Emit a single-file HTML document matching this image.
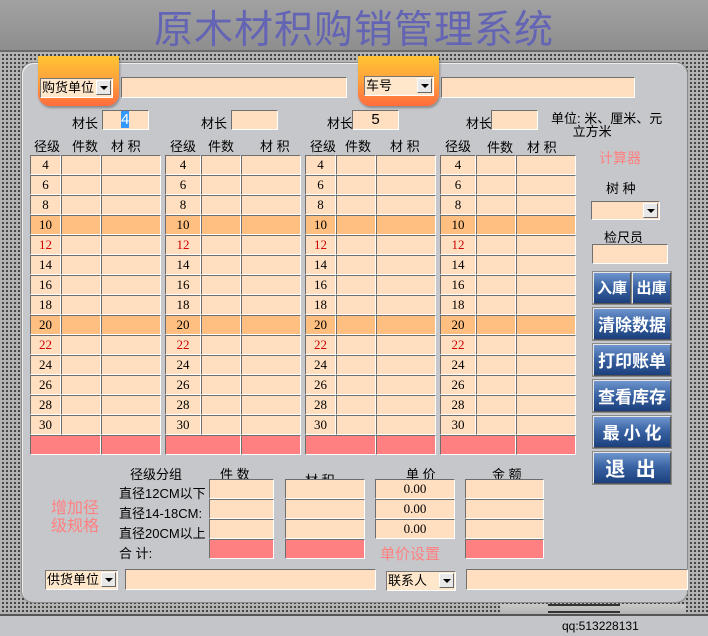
<!DOCTYPE html>
<html><head><meta charset="utf-8">
<style>
*{box-sizing:border-box;margin:0;padding:0}
body{width:708px;height:636px;overflow:hidden;position:relative;font-family:"Liberation Sans","Noto Sans CJK SC",sans-serif;font-size:12px;color:#000;
background:#b4b4b4 radial-gradient(circle,#3a3a3a 0.9px,transparent 1.3px) 1px 1px/4px 4px;}
.a{position:absolute}
#title{left:0;top:0;width:708px;height:52px;background:linear-gradient(#a2a2a2,#8e8e8e);border-bottom:2px solid #6a6a6a;text-align:center;font-size:39px;line-height:54px;color:#6464b4;letter-spacing:1px;font-family:"Noto Sans CJK SC",sans-serif}
#panel{left:21px;top:62px;width:667px;height:541px;background:#c6c7cb;border-radius:12px;border:1px solid #8a8a8a;box-shadow:inset 1px 1px 0 #eee}
#status{left:0;top:614px;width:708px;height:22px;background:#c4c5c9;border-top:2px solid #555}
.tab{width:81px;height:50px;border-radius:0 0 12px 12px;background:linear-gradient(#ffc432,#ffa03c 50%,#ff6c3c);box-shadow:1px 2px 2px rgba(0,0,0,.3)}
.in{background:#ffdfc0;border-top:1px solid #707070;border-left:1px solid #707070;border-right:1px solid #fff;border-bottom:1px solid #fff}
.cb{background:#ffe7cc;border:1px solid #fff;border-top-color:#777;border-left-color:#777;font-size:13px;line-height:17px;padding-left:1px}
.dd{position:absolute;right:1px;top:1px;width:15px;height:15px;background:#e8e8e8;border:1px solid #fff;border-right-color:#666;border-bottom-color:#666}
.dd:after{content:"";position:absolute;left:3px;top:5px;border-left:4px solid transparent;border-right:4px solid transparent;border-top:4px solid #000}
.g{display:grid;grid-auto-rows:20px}
.g div{background:#ffdfc0;border-top:1px solid #6e6e6e;border-left:1px solid #6e6e6e;border-right:1px solid #fff;border-bottom:1px solid #fff;text-align:center;line-height:18px;font-size:13px;font-family:"Liberation Serif","Noto Sans CJK SC",serif}
.g .o{background:#ffbf80}
.g .r{color:#d00000}
.g .p{background:#ff8080}
.h{font-size:13px}
.btn{width:78px;height:32px;background:linear-gradient(#6f95cc,#3a64a4 45%,#1c3f7c);border:1px solid #e6e6e6;border-right-color:#555;border-bottom-color:#555;color:#fff;font-weight:bold;font-size:17px;text-align:center;line-height:30px;font-family:"Noto Sans CJK SC",sans-serif;outline:1px solid #8a8a8a;white-space:nowrap;overflow:hidden}
.pk{color:#ff8080;font-family:"Noto Sans CJK SC",sans-serif}
</style></head><body>
<div id="title" class="a">原木材积购销管理系统</div>
<div id="panel" class="a"></div>
<div id="status" class="a"><span class="a" style="left:562px;top:3px;font-size:12px">qq:513228131</span></div>
<div class="a" style="left:500px;top:604px;width:186px;height:10px;background:linear-gradient(#c8c8c8,#b4b4b4)"></div>
<div class="a" style="left:548px;top:604px;width:72px;height:2px;background:#333"></div>
<div class="a" style="left:548px;top:611px;width:72px;height:2px;background:#333"></div>

<div class="a tab" style="left:38px;top:56px"></div>
<div class="a cb" style="left:40px;top:78px;width:73px;height:20px">购货单位<span class="dd"></span></div>
<div class="a in" style="left:121px;top:77px;width:226px;height:21px"></div>
<div class="a tab" style="left:358px;top:56px"></div>
<div class="a cb" style="left:364px;top:76px;width:70px;height:20px">车号<span class="dd"></span></div>
<div class="a in" style="left:441px;top:77px;width:194px;height:21px"></div>

<span class="a h" style="left:72px;top:113px">材长</span>
<div class="a in" style="left:102px;top:110px;width:47px;height:20px;font-size:15px;line-height:18px;padding-left:18px"><span style="background:#3399ff;color:#fff">4</span></div>
<span class="a h" style="left:201px;top:113px">材长</span>
<div class="a in" style="left:231px;top:110px;width:47px;height:20px"></div>
<span class="a h" style="left:327px;top:113px">材长</span>
<div class="a in" style="left:352px;top:110px;width:47px;height:20px;text-align:center;font-size:15px;line-height:18px">5</div>
<span class="a h" style="left:466px;top:113px">材长</span>
<div class="a in" style="left:491px;top:110px;width:47px;height:20px"></div>
<span class="a h" style="left:551px;top:112px;line-height:13px">单位: 米、厘米、元<br>&nbsp;&nbsp;&nbsp;&nbsp;&nbsp;&nbsp;立方米</span>

<span class="a h" style="left:34px;top:136px">径级</span><span class="a h" style="left:72px;top:136px">件数</span><span class="a h" style="left:111px;top:136px">材 积</span>
<span class="a h" style="left:170px;top:136px">径级</span><span class="a h" style="left:208px;top:136px">件数</span><span class="a h" style="left:260px;top:136px">材 积</span>
<span class="a h" style="left:310px;top:136px">径级</span><span class="a h" style="left:345px;top:136px">件数</span><span class="a h" style="left:390px;top:136px">材 积</span>
<span class="a h" style="left:445px;top:136px">径级</span><span class="a h" style="left:487px;top:137px">件数</span><span class="a h" style="left:527px;top:137px">材 积</span>

<div class="a g" style="left:30px;top:155px;grid-template-columns:31px 40px 60px">
<div>4</div><div></div><div></div><div>6</div><div></div><div></div><div>8</div><div></div><div></div>
<div class="o">10</div><div class="o"></div><div class="o"></div><div class="r">12</div><div></div><div></div>
<div>14</div><div></div><div></div><div>16</div><div></div><div></div><div>18</div><div></div><div></div>
<div class="o">20</div><div class="o"></div><div class="o"></div><div class="r">22</div><div></div><div></div>
<div>24</div><div></div><div></div><div>26</div><div></div><div></div><div>28</div><div></div><div></div><div>30</div><div></div><div></div>
<div class="p" style="grid-column:span 2"></div><div class="p"></div>
</div>
<div class="a g" style="left:165px;top:155px;grid-template-columns:36px 40px 60px">
<div>4</div><div></div><div></div><div>6</div><div></div><div></div><div>8</div><div></div><div></div>
<div class="o">10</div><div class="o"></div><div class="o"></div><div class="r">12</div><div></div><div></div>
<div>14</div><div></div><div></div><div>16</div><div></div><div></div><div>18</div><div></div><div></div>
<div class="o">20</div><div class="o"></div><div class="o"></div><div class="r">22</div><div></div><div></div>
<div>24</div><div></div><div></div><div>26</div><div></div><div></div><div>28</div><div></div><div></div><div>30</div><div></div><div></div>
<div class="p" style="grid-column:span 2"></div><div class="p"></div>
</div>
<div class="a g" style="left:305px;top:155px;grid-template-columns:31px 40px 60px">
<div>4</div><div></div><div></div><div>6</div><div></div><div></div><div>8</div><div></div><div></div>
<div class="o">10</div><div class="o"></div><div class="o"></div><div class="r">12</div><div></div><div></div>
<div>14</div><div></div><div></div><div>16</div><div></div><div></div><div>18</div><div></div><div></div>
<div class="o">20</div><div class="o"></div><div class="o"></div><div class="r">22</div><div></div><div></div>
<div>24</div><div></div><div></div><div>26</div><div></div><div></div><div>28</div><div></div><div></div><div>30</div><div></div><div></div>
<div class="p" style="grid-column:span 2"></div><div class="p"></div>
</div>
<div class="a g" style="left:440px;top:155px;grid-template-columns:36px 40px 60px">
<div>4</div><div></div><div></div><div>6</div><div></div><div></div><div>8</div><div></div><div></div>
<div class="o">10</div><div class="o"></div><div class="o"></div><div class="r">12</div><div></div><div></div>
<div>14</div><div></div><div></div><div>16</div><div></div><div></div><div>18</div><div></div><div></div>
<div class="o">20</div><div class="o"></div><div class="o"></div><div class="r">22</div><div></div><div></div>
<div>24</div><div></div><div></div><div>26</div><div></div><div></div><div>28</div><div></div><div></div><div>30</div><div></div><div></div>
<div class="p" style="grid-column:span 2"></div><div class="p"></div>
</div>

<span class="a pk" style="left:599px;top:148px;font-size:14px">计算器</span>
<span class="a h" style="left:606px;top:178px">树 种</span>
<div class="a in" style="left:591px;top:201px;width:69px;height:19px"><span class="dd"></span></div>
<span class="a h" style="left:604px;top:227px">检尺员</span>
<div class="a in" style="left:592px;top:244px;width:76px;height:20px"></div>
<div class="a btn" style="left:593px;top:272px;width:38px;font-size:15px">入庫</div>
<div class="a btn" style="left:632px;top:272px;width:39px;font-size:15px">出庫</div>
<div class="a btn" style="left:593px;top:308px">清除数据</div>
<div class="a btn" style="left:593px;top:344px">打印账单</div>
<div class="a btn" style="left:593px;top:380px">查看库存</div>
<div class="a btn" style="left:593px;top:416px">最 小 化</div>
<div class="a btn" style="left:593px;top:452px;font-size:20px;letter-spacing:3px">退 出</div>

<span class="a pk" style="left:51px;top:497px;font-size:16px;line-height:18px">增加径<br>级规格</span>
<span class="a h" style="left:130px;top:464px">径级分组</span>
<span class="a h" style="left:220px;top:464px">件 数</span>
<span class="a h" style="left:305px;top:470px;height:9px;overflow:hidden">材 积</span>
<span class="a h" style="left:406px;top:464px">单 价</span>
<span class="a h" style="left:492px;top:464px">金 额</span>
<span class="a h" style="left:119px;top:483px">直径12CM以下</span>
<span class="a h" style="left:119px;top:503px">直径14-18CM:</span>
<span class="a h" style="left:119px;top:523px">直径20CM以上</span>
<span class="a h" style="left:119px;top:543px">合 计:</span>
<div class="a g" style="left:209px;top:479px;grid-template-columns:65px">
<div></div><div></div><div></div><div class="p"></div></div>
<div class="a g" style="left:285px;top:479px;grid-template-columns:80px">
<div></div><div></div><div></div><div class="p"></div></div>
<div class="a g" style="left:375px;top:479px;grid-template-columns:80px">
<div>0.00</div><div>0.00</div><div>0.00</div></div>
<div class="a g" style="left:465px;top:479px;grid-template-columns:79px">
<div></div><div></div><div></div><div class="p"></div></div>
<span class="a pk" style="left:380px;top:543px;font-size:15px">单价设置</span>

<div class="a cb" style="left:45px;top:570px;width:73px;height:20px">供货单位<span class="dd"></span></div>
<div class="a in" style="left:125px;top:569px;width:251px;height:21px"></div>
<div class="a cb" style="left:386px;top:571px;width:70px;height:20px">联系人<span class="dd"></span></div>
<div class="a in" style="left:466px;top:569px;width:222px;height:21px"></div>
</body></html>
